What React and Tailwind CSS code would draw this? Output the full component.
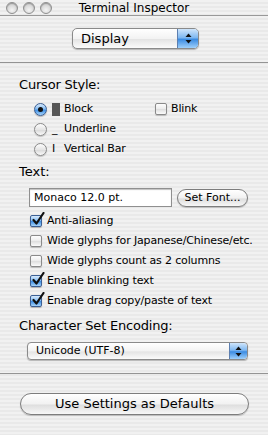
import React from 'react';

const font = "font-['Lucida_Grande','DejaVu_Sans',sans-serif]";

function Light() {
  return (
    <span className="block w-[12px] h-[12px] rounded-full border border-[#8f8f8f] bg-[radial-gradient(circle_at_50%_70%,#f4f4f4_0%,#d6d6d6_60%,#bdbdbd_100%)] shadow-[inset_0_1px_1px_rgba(0,0,0,0.25)]" />
  );
}

function Radio({ on }) {
  if (on) {
    return (
      <span className="flex items-center justify-center w-[13px] h-[13px] rounded-full border border-[#3b5f94] bg-[linear-gradient(180deg,#d8eafc_0%,#86bdf3_45%,#3f8fe4_55%,#a6d4fb_100%)] shadow-[0_1px_1px_rgba(0,0,0,0.25)]">
        <span className="block w-[5px] h-[5px] rounded-full bg-[#111]" />
      </span>
    );
  }
  return (
    <span className="block w-[13px] h-[13px] rounded-full border border-[#8a8a8a] bg-[linear-gradient(180deg,#fdfdfd_0%,#e6e6e6_50%,#d9d9d9_55%,#fbfbfb_100%)] shadow-[0_1px_1px_rgba(0,0,0,0.2)]" />
  );
}

function Check({ on }) {
  if (on) {
    return (
      <span className="relative block w-[12px] h-[12px] rounded-[2px] border border-[#3b5f94] bg-[linear-gradient(180deg,#d8eafc_0%,#86bdf3_45%,#3f8fe4_55%,#a6d4fb_100%)] shadow-[0_1px_1px_rgba(0,0,0,0.25)]">
        <svg className="absolute left-[1px] top-[-4px]" width="13" height="14" viewBox="0 0 13 14">
          <path d="M1.5 8 L4.5 11.5 L11.5 1" fill="none" stroke="#111" strokeWidth="2.2" strokeLinecap="round" strokeLinejoin="round" />
        </svg>
      </span>
    );
  }
  return (
    <span className="block w-[12px] h-[12px] rounded-[2px] border border-[#8a8a8a] bg-[linear-gradient(180deg,#fdfdfd_0%,#ececec_50%,#e0e0e0_55%,#fbfbfb_100%)] shadow-[0_1px_1px_rgba(0,0,0,0.2)]" />
  );
}

function Stepper({ w }) {
  return (
    <span className={`flex items-center justify-center ${w} h-full rounded-r-[4px] border-l border-[#5d7fb0] bg-[linear-gradient(180deg,#cfe5fb_0%,#7fb8f1_45%,#3c8ce2_55%,#9fd0fb_100%)]`}>
      <svg width="7" height="11" viewBox="0 0 7 11">
        <path d="M3.5 0.5 L6.5 4 L0.5 4 Z" fill="#111" />
        <path d="M3.5 10.5 L6.5 7 L0.5 7 Z" fill="#111" />
      </svg>
    </span>
  );
}

function CheckRow({ on, label }) {
  return (
    <div className="flex items-center h-[20px] pl-[30px] gap-[5px] text-[11px] tracking-[-0.15px]">
      <Check on={on} />
      <span>{label}</span>
    </div>
  );
}

export default function App() {
  const rows = [
    [true, 'Anti-aliasing'],
    [false, 'Wide glyphs for Japanese/Chinese/etc.'],
    [false, 'Wide glyphs count as 2 columns'],
    [true, 'Enable blinking text'],
    [true, 'Enable drag copy/paste of text'],
  ];

  return (
    <div className={`w-[268px] h-[435px] overflow-hidden text-black ${font} bg-[repeating-linear-gradient(180deg,#f1f1f1_0px,#f1f1f1_2px,#e9e9e9_2px,#e9e9e9_4px)]`}>
      {/* Title bar */}
      <div className="flex items-center h-[16px] border-b border-[#999]">
        <div className="flex items-center gap-[5px] w-[60px] pl-[6px] pt-[1px]">
          <Light />
          <Light />
          <Light />
        </div>
        <div className="flex-1 text-center text-[12px] leading-[14px]">Terminal Inspector</div>
        <div className="w-[60px]" />
      </div>

      {/* Pane popup */}
      <div className="pt-[12px] pb-[13px] border-b border-[#949494]">
        <div className="ml-[72px] w-[127px] h-[21px] flex rounded-[5px] border border-[#8a8a8a] bg-[linear-gradient(180deg,#ffffff_0%,#f3f3f3_50%,#e4e4e4_55%,#fbfbfb_100%)] shadow-[0_1px_1px_rgba(0,0,0,0.25)]">
          <span className="flex-1 pl-[8px] text-[13px] leading-[19px]">Display</span>
          <Stepper w="w-[21px]" />
        </div>
      </div>

      {/* Content */}
      <div className="pt-[14px]">
        <div className="pl-[19px] text-[13px] leading-[16px] tracking-[-0.2px]">Cursor Style:</div>

        <div className="mt-[6px] text-[11px] tracking-[-0.15px]">
          <div className="flex items-center h-[20px] pl-[34px]">
            <Radio on />
            <span className="w-[17px] flex justify-center pl-[1px]">
              <span className="block w-[8px] h-[13px] bg-[#585858]" />
            </span>
            <span className="w-[91px]">Block</span>
            <Check on={false} />
            <span className="ml-[4px]">Blink</span>
          </div>
          <div className="flex items-center h-[20px] pl-[34px]">
            <Radio />
            <span className="w-[17px] pl-[5px] leading-[14px]">_</span>
            <span>Underline</span>
          </div>
          <div className="flex items-center h-[20px] pl-[34px]">
            <Radio />
            <span className="w-[17px] pl-[5px]">I</span>
            <span>Vertical Bar</span>
          </div>
        </div>

        <div className="mt-[5px] pl-[19px] text-[13px] leading-[16px]">Text:</div>

        <div className="mt-[8px] flex items-center pl-[29px]">
          <div className="w-[143px] h-[19px] bg-white border border-[#8f8f8f] shadow-[inset_0_1px_1px_rgba(0,0,0,0.25)] pl-[4px] text-[11px] leading-[17px]">
            Monaco 12.0 pt.
          </div>
          <button className="ml-[5px] w-[71px] h-[18px] rounded-full border border-[#7d7d7d] bg-[linear-gradient(180deg,#ffffff_0%,#f1f1f1_50%,#dedede_55%,#f7f7f7_100%)] shadow-[0_1px_1px_rgba(0,0,0,0.2)] text-[11px] leading-[16px]">
            Set Font...
          </button>
        </div>

        <div className="mt-[4px]">
          {rows.map(([on, label]) => (
            <CheckRow key={label} on={on} label={label} />
          ))}
        </div>

        <div className="mt-[7px] pl-[19px] text-[13px] leading-[16px] tracking-[-0.2px]">Character Set Encoding:</div>

        <div className="mt-[8px] ml-[27px] w-[221px] h-[18px] flex rounded-[4px] border border-[#8a8a8a] bg-[linear-gradient(180deg,#ffffff_0%,#f3f3f3_50%,#e4e4e4_55%,#fbfbfb_100%)] shadow-[0_1px_1px_rgba(0,0,0,0.25)]">
          <span className="flex-1 pl-[8px] text-[11px] leading-[16px]">Unicode (UTF-8)</span>
          <Stepper w="w-[18px]" />
        </div>

        <div className="mt-[13px] border-b border-[#949494]" />

        <button className="mt-[19px] ml-[20px] w-[229px] h-[22px] rounded-full border border-[#7d7d7d] bg-[linear-gradient(180deg,#ffffff_0%,#f1f1f1_50%,#dedede_55%,#f7f7f7_100%)] shadow-[0_1px_1px_rgba(0,0,0,0.2)] text-[13px] leading-[20px] block">
          Use Settings as Defaults
        </button>
      </div>
    </div>
  );
}
